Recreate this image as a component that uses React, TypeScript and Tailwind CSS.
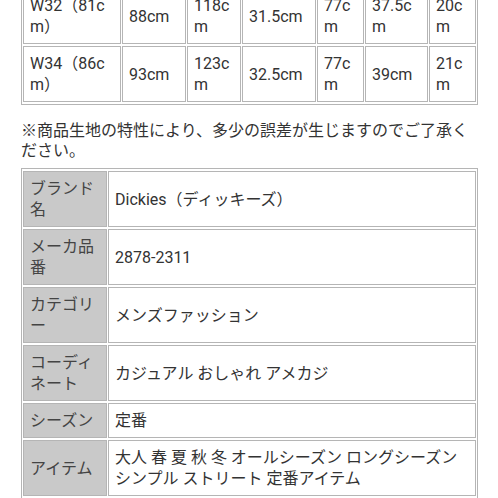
import React from 'react';

const sizeRows = [
  ['W32（81cm）', '88cm', '118cm', '31.5cm', '77cm', '37.5cm', '20cm'],
  ['W34（86cm）', '93cm', '123cm', '32.5cm', '77cm', '39cm', '21cm'],
];

const colWidths = ['w-[98px]', 'w-[64px]', 'w-[54px]', 'w-[74px]', 'w-[47px]', 'w-[63px]', 'w-[47px]'];

const specRows: [string, string][] = [
  ['ブランド名', 'Dickies（ディッキーズ）'],
  ['メーカ品番', '2878-2311'],
  ['カテゴリー', 'メンズファッション'],
  ['コーディネート', 'カジュアル おしゃれ アメカジ'],
  ['シーズン', '定番'],
  ['アイテム', '大人 春 夏 秋 冬 オールシーズン ロングシーズン シンプル ストリート 定番アイテム'],
  ['素材', '綿 ポリエステル'],
];

export default function App() {
  return (
    <div
      className="h-[498px] w-[498px] overflow-hidden bg-white text-[16px] leading-[21px] text-[#333]"
      style={{ fontFamily: 'Roboto, "Noto Sans CJK JP", sans-serif' }}
    >
      <div className="-mt-[15px] px-[21px]">
        <table className="w-[457px] table-fixed border-separate border border-[#b5b5b5] [border-spacing:1px_2px]">
          <tbody>
            {sizeRows.map((row, i) => (
              <tr key={i}>
                {row.map((cell, j) => (
                  <td
                    key={j}
                    className={`${colWidths[j]} border border-[#b5b5b5] px-[6px] py-[6px] align-middle break-all`}
                  >
                    {cell}
                  </td>
                ))}
              </tr>
            ))}
          </tbody>
        </table>

        <p className="mt-[16px] mb-[8px] leading-[20px]">
          ※商品生地の特性により、多少の誤差が生じますのでご了承ください。
        </p>

        <table className="-mt-[1px] w-[457px] table-fixed border-separate border border-[#b5b5b5] [border-spacing:1px_2px]">
          <tbody>
            {specRows.map(([label, value]) => (
              <tr key={label}>
                <th className="w-[84px] border border-[#b5b5b5] bg-[#c9c9c9] px-[6px] py-[6px] text-left align-middle font-normal text-[#444] break-all">
                  {label}
                </th>
                <td className="border border-[#b5b5b5] px-[6px] py-[6px] align-middle">
                  {value}
                </td>
              </tr>
            ))}
          </tbody>
        </table>
      </div>
    </div>
  );
}
